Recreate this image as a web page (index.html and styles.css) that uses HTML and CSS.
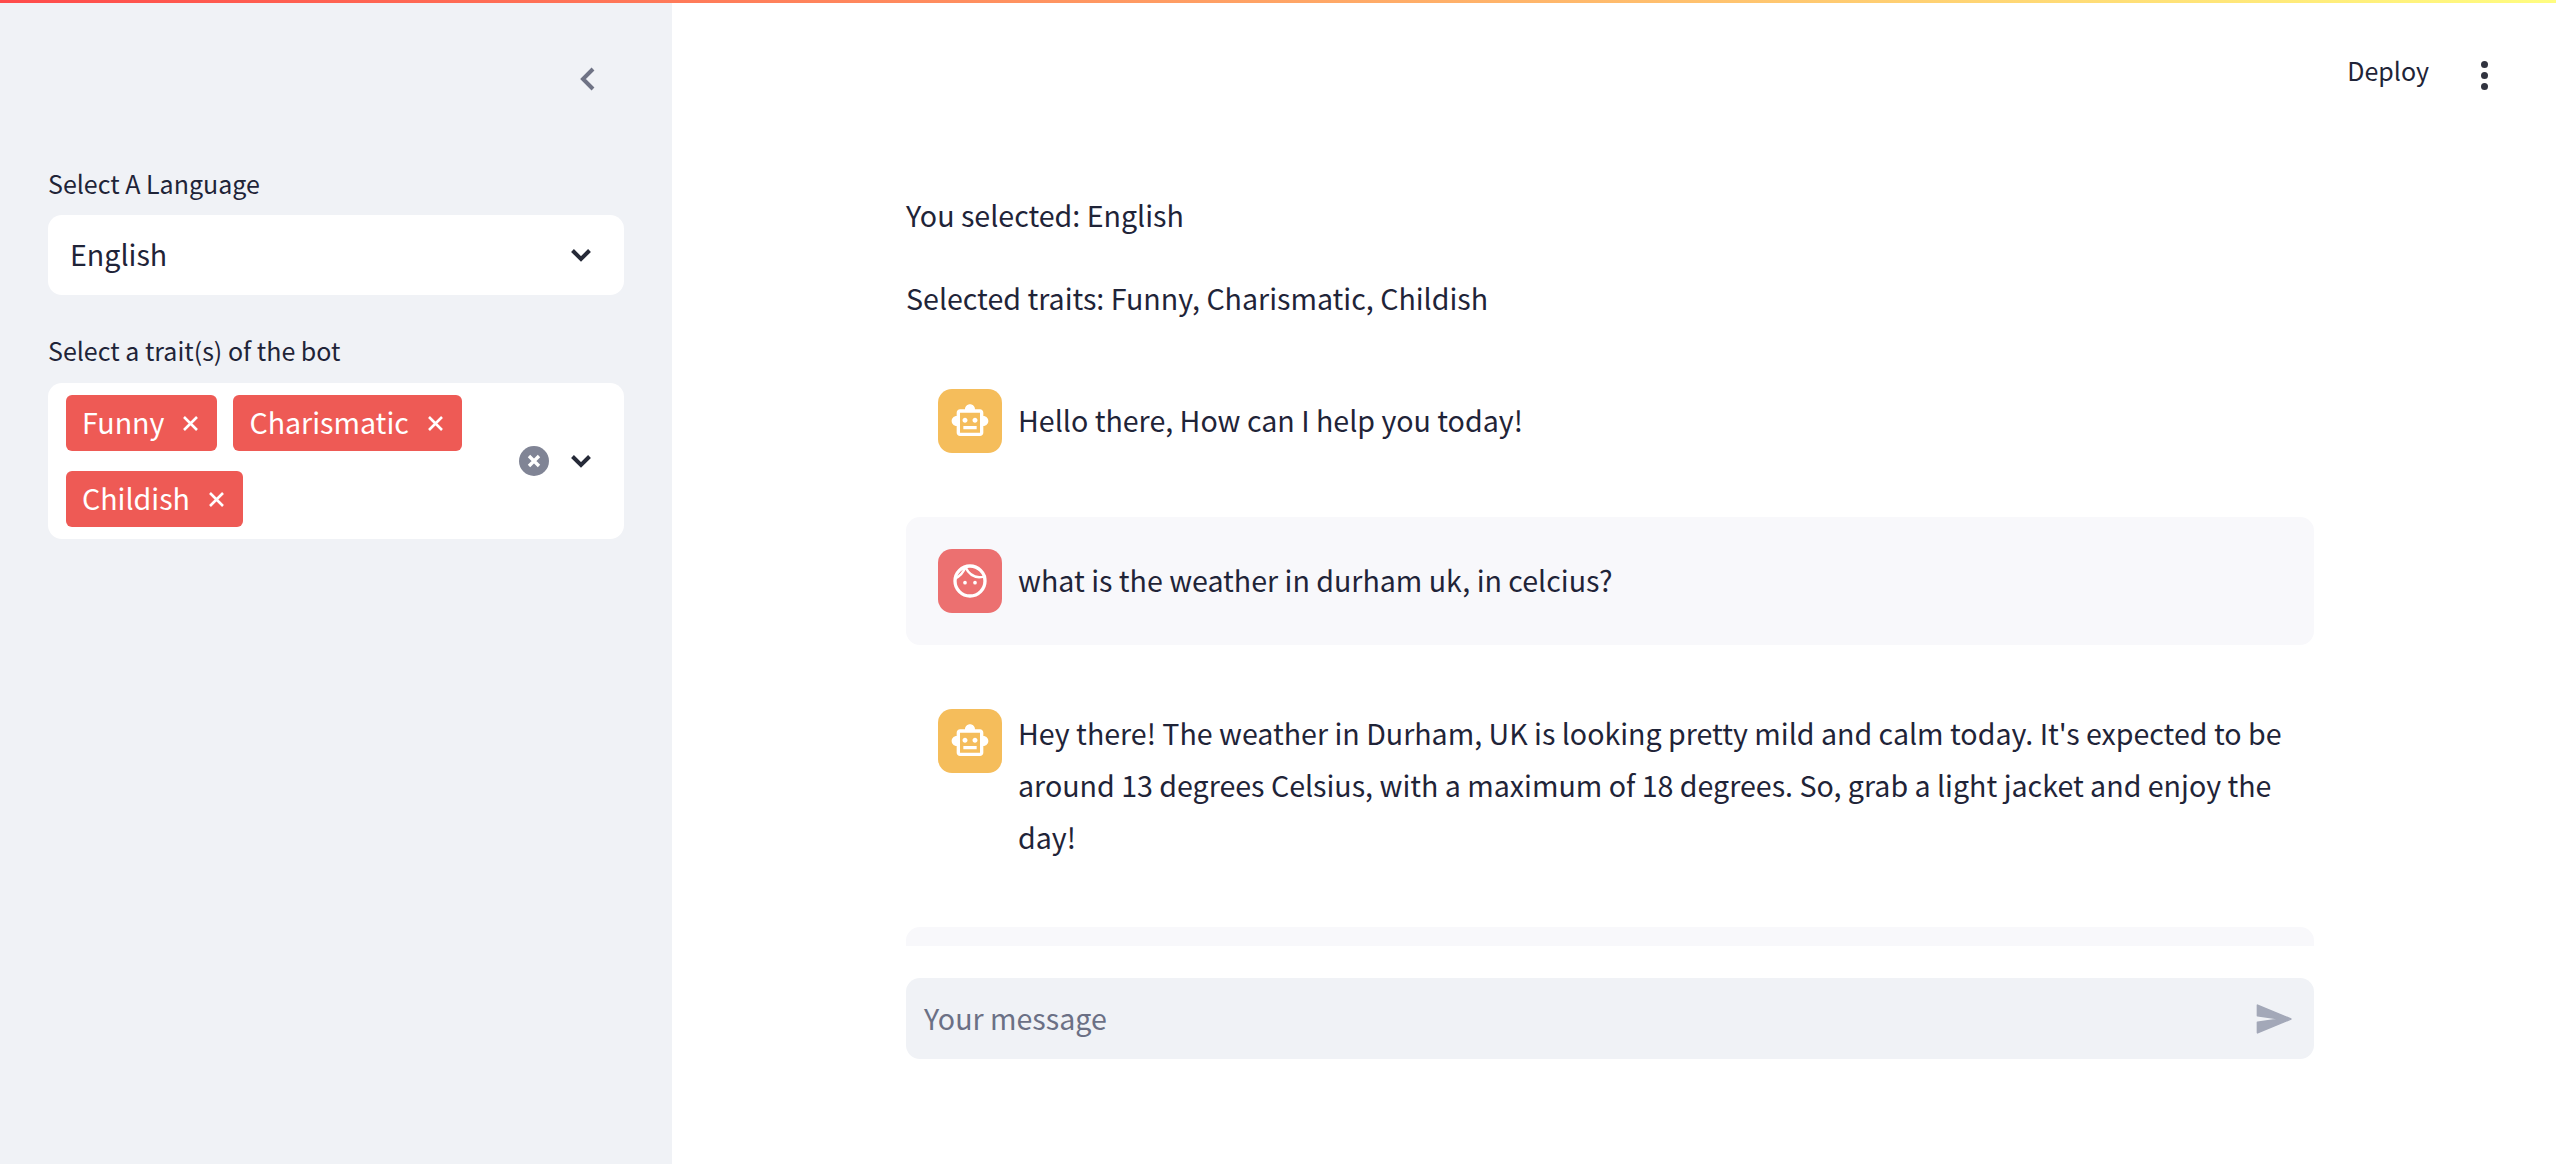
FILE: index.html
```html
<!DOCTYPE html>
<html lang="en">
<head>
  <meta charset="UTF-8" />
  <title>Chatbot</title>
  <link rel="stylesheet" href="styles.css">
</head>
<body>
  <div class="topbar"></div>
  <div class="app">
    <aside class="sidebar">
      <div class="collapse">
        <svg width="15" height="24" viewBox="0 0 15 24"><path d="M13 2 3 12l10 10" fill="none" stroke="#6f7385" stroke-width="4"/></svg>
      </div>
      <div class="field-label">Select A Language</div>
      <div class="select">
        <span class="select-value">English</span>
        <svg class="chev" width="22" height="14" viewBox="0 0 22 14"><path d="M2.500 2.500 11 11l8.500-8.500" fill="none" stroke="#262a38" stroke-width="4"/></svg>
      </div>
      <div class="field-label second">Select a trait(s) of the bot</div>
      <div class="select multi">
        <div class="tags">
          <span class="tag">Funny <svg width="17" height="17" viewBox="0 0 17 17"><path d="M2 2l13 13M15 2 2 15" stroke="#fff" stroke-width="2.600"/></svg></span>
          <span class="tag">Charismatic <svg width="17" height="17" viewBox="0 0 17 17"><path d="M2 2l13 13M15 2 2 15" stroke="#fff" stroke-width="2.600"/></svg></span>
          <span class="tag">Childish <svg width="17" height="17" viewBox="0 0 17 17"><path d="M2 2l13 13M15 2 2 15" stroke="#fff" stroke-width="2.600"/></svg></span>
        </div>
        <svg class="clear" width="30" height="30" viewBox="0 0 30 30"><circle cx="15" cy="15" r="15" fill="#808495"/><path d="M10 10l10 10M20 10 10 20" stroke="#fff" stroke-width="3.400"/></svg>
        <svg class="chev" width="22" height="14" viewBox="0 0 22 14"><path d="M2.500 2.500 11 11l8.500-8.500" fill="none" stroke="#262a38" stroke-width="4"/></svg>
      </div>
    </aside>

    <main class="main">
      <header class="header">
        <span class="deploy">Deploy</span>
        <div class="dots"><i></i><i></i><i></i></div>
      </header>

      <div class="chat">
        <p class="line">You selected: English</p>
        <p class="line">Selected traits: Funny, Charismatic, Childish</p>

        <div class="msg">
          <div class="avatar bot">
            <svg width="40" height="40" viewBox="0 0 24 24"><path fill="#fff" d="M20 9V7c0-1.100-.9-2-2-2h-3c0-1.660-1.340-3-3-3S9 3.340 9 5H6c-1.100 0-2 .9-2 2v2c-1.660 0-3 1.340-3 3s1.340 3 3 3v4c0 1.100.9 2 2 2h12c1.100 0 2-.9 2-2v-4c1.660 0 3-1.340 3-3s-1.340-3-3-3zm-2 10H6V7h12v12zm-9-6c-.83 0-1.500-.67-1.500-1.500S8.170 10 9 10s1.500.67 1.500 1.500S9.830 13 9 13zm7.500-1.500c0 .83-.67 1.500-1.500 1.500s-1.500-.67-1.500-1.500.67-1.500 1.500-1.500 1.500.67 1.500 1.500zM8 15h8v2H8v-2z"/></svg>
          </div>
          <div class="msg-text">Hello there, How can I help you today!</div>
        </div>

        <div class="msg user">
          <div class="avatar human">
            <svg width="40" height="40" viewBox="0 0 24 24"><circle cx="12" cy="12" r="9" fill="none" stroke="#fff" stroke-width="2"/><path d="M3 10.500Q7.500 8.500 9.300 3.500M9.300 3.800Q12 9.500 17.500 9.800 20 9.800 21.500 9" fill="none" stroke="#fff" stroke-width="1.500"/><circle cx="9" cy="13" r="1.100" fill="#fff"/><circle cx="15" cy="13" r="1.100" fill="#fff"/></svg>
          </div>
          <div class="msg-text">what is the weather in durham uk, in celcius?</div>
        </div>

        <div class="msg">
          <div class="avatar bot">
            <svg width="40" height="40" viewBox="0 0 24 24"><path fill="#fff" d="M20 9V7c0-1.100-.9-2-2-2h-3c0-1.660-1.340-3-3-3S9 3.340 9 5H6c-1.100 0-2 .9-2 2v2c-1.660 0-3 1.340-3 3s1.340 3 3 3v4c0 1.100.9 2 2 2h12c1.100 0 2-.9 2-2v-4c1.660 0 3-1.340 3-3s-1.340-3-3-3zm-2 10H6V7h12v12zm-9-6c-.83 0-1.500-.67-1.500-1.500S8.170 10 9 10s1.500.67 1.500 1.500S9.830 13 9 13zm7.500-1.500c0 .83-.67 1.500-1.500 1.500s-1.500-.67-1.500-1.500.67-1.500 1.500-1.500 1.500.67 1.500 1.500zM8 15h8v2H8v-2z"/></svg>
          </div>
          <div class="msg-text">Hey there! The weather in Durham, UK is looking pretty mild and calm today. It's expected to be around 13 degrees Celsius, with a maximum of 18 degrees. So, grab a light jacket and enjoy the day!</div>
        </div>

        <div class="msg user empty"></div>
      </div>

      <div class="footer">
        <div class="input">
          <span class="placeholder">Your message</span>
          <svg width="40" height="40" viewBox="0 0 24 24"><path d="M1.500 20.300 21.500 12 1.500 3.700 1.500 10 15 12 1.500 14z" fill="#a3a8b8" stroke="#a3a8b8" stroke-width="1" stroke-linejoin="round"/></svg>
        </div>
      </div>
    </main>
  </div>
</body>
</html>
```

FILE: styles.css
```css
* {
  box-sizing: border-box;
}

html, body {
  height: 100%;
}

body {
  margin: 0;
  display: flex;
  flex-direction: column;
  overflow: hidden;
  background: #fff;
  color: #1f2438;
  font-family: 'Noto Sans CJK JP', 'Noto Sans', sans-serif;
  font-size: 28.6px;
  line-height: 52px;
}

.topbar {
  height: 3px;
  flex: none;
  background: linear-gradient(90deg, #ff4b4b, #fffd80);
}

.app {
  flex: 1;
  display: flex;
  min-height: 0;
}

/* sidebar */
.sidebar {
  width: 672px;
  flex: none;
  background: #f0f2f6;
  padding: 0 48px;
}

.collapse {
  display: flex;
  justify-content: flex-end;
  height: 149px;
  padding: 64px 29px 0 0;
}

.field-label {
  font-size: 25px;
  line-height: 62px;
  margin-bottom: 1px;
}

.field-label.second {
  margin-top: 24px;
  margin-bottom: 2px;
}

.select {
  display: flex;
  align-items: center;
  height: 80px;
  padding: 0 32px 0 22px;
  background: #fff;
  border-radius: 14px;
}

.select-value {
  flex: 1;
  margin-top: -2px;
}

.select.multi {
  height: auto;
  padding: 12px 32px 12px 18px;
}

.tags {
  flex: 1;
  display: flex;
  flex-wrap: wrap;
  gap: 20px 16px;
}

.tag {
  display: flex;
  align-items: center;
  gap: 18px;
  height: 56px;
  padding: 0 18px 3px 16px;
  background: #ee5a55;
  border-radius: 6px;
  color: #fff;
  line-height: 53px;
}

.tag svg {
  margin-top: 3px;
}

.clear {
  margin-right: 21px;
}

/* main column */
.main {
  flex: 1;
  min-width: 0;
  display: flex;
  flex-direction: column;
}

.header {
  flex: none;
  height: 95px;
  padding: 41px 68px 0 0;
  display: flex;
  justify-content: flex-end;
  align-items: flex-start;
  gap: 52px;
}

.deploy {
  font-size: 25px;
}

.dots {
  display: flex;
  flex-direction: column;
  gap: 4px;
  padding-top: 17px;
}

.dots i {
  display: block;
  width: 7px;
  height: 7px;
  border-radius: 50%;
  background: #31333f;
}

.chat {
  flex: 1;
  min-height: 0;
  overflow: hidden;
  padding: 91px 242px 0 234px;
}

.line {
  margin: 0 0 31px;
}

.line + .line {
  margin-bottom: 33px;
}

.msg {
  display: flex;
  align-items: center;
  gap: 16px;
  padding: 32px;
  margin-bottom: 32px;
  border-radius: 14px;
}

.msg.user {
  background: #f8f8fb;
}

.msg.empty {
  height: 128px;
}

.avatar {
  width: 64px;
  height: 64px;
  flex: none;
  border-radius: 14px;
  display: flex;
  align-items: center;
  justify-content: center;
  align-self: flex-start;
}

.avatar.bot {
  background: #f5bd5b;
}

.avatar.human {
  background: #ec7070;
}

.msg-text {
  flex: 1;
  margin-top: -2px;
}

/* chat input */
.footer {
  flex: none;
  height: 218px;
  padding: 32px 242px 0 234px;
}

.input {
  height: 81px;
  display: flex;
  align-items: center;
  justify-content: space-between;
  padding: 0 19px 0 18px;
  background: #f0f2f6;
  border-radius: 14px;
}

.placeholder {
  color: #6b7085;
  margin-top: -2px;
}
```
